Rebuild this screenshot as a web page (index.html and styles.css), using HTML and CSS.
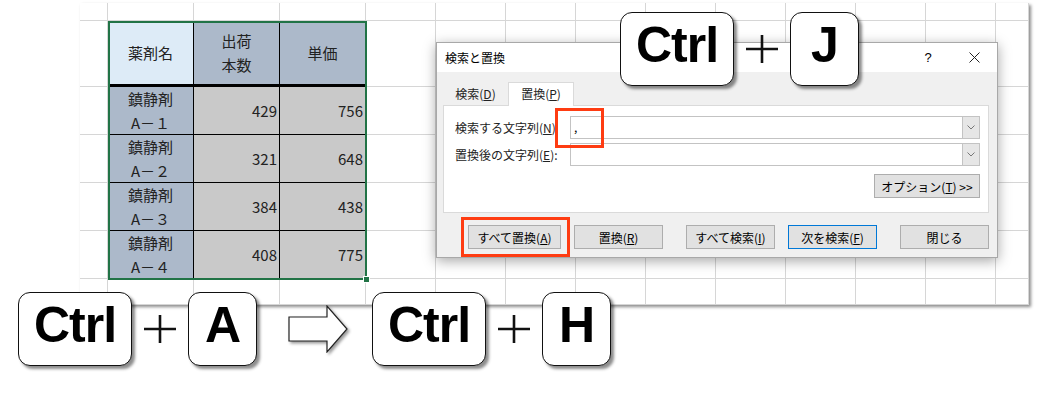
FILE: index.html
```html
<!DOCTYPE html>
<html lang="ja">
<head>
    <meta charset="UTF-8">
    <meta name="viewport" content="width=device-width, initial-scale=1.0">
    <title>検索と置換</title>
    <link rel="stylesheet" href="styles.css">
</head>
<body>
    <div class="stage">
        <div class="sheet" id="sheet">
            <div class="table">
                <div class="cell head-blue">薬剤名</div>
                <div class="cell head">出荷<br>本数</div>
                <div class="cell head">単価</div>

                <div class="cell name">鎮静剤<br>A－１</div>
                <div class="cell num">429</div>
                <div class="cell num">756</div>

                <div class="cell name">鎮静剤<br>A－２</div>
                <div class="cell num">321</div>
                <div class="cell num">648</div>

                <div class="cell name">鎮静剤<br>A－３</div>
                <div class="cell num">384</div>
                <div class="cell num">438</div>

                <div class="cell name">鎮静剤<br>A－４</div>
                <div class="cell num">408</div>
                <div class="cell num">775</div>

                <span class="handle"></span>
            </div>
        </div>

        <div class="dialog">
            <div class="titlebar">
                <span class="title">検索と置換</span>
                <span class="caption-btn">?</span>
                <span class="caption-btn">
                    <svg width="11" height="11" viewBox="0 0 11 11"><path d="M0.5 0.5L10.5 10.5M10.5 0.5L0.5 10.5" stroke="#222" stroke-width="1"/></svg>
                </span>
            </div>
            <div class="dialog-body">
                <div class="tabs">
                    <div class="tab">検索(<u>D</u>)</div>
                    <div class="tab active">置換(<u>P</u>)</div>
                </div>
                <div class="panel">
                    <div class="field">
                        <label>検索する文字列(<u>N</u>)</label>
                        <div class="combo">
                            <span class="value">,</span>
                            <span class="drop"><svg width="8" height="5" viewBox="0 0 8 5"><path d="M0.5 0.5L4 4L7.5 0.5" fill="none" stroke="#777"/></svg></span>
                        </div>
                    </div>
                    <div class="field">
                        <label>置換後の文字列(<u>E</u>):</label>
                        <div class="combo">
                            <span class="value"></span>
                            <span class="drop"><svg width="8" height="5" viewBox="0 0 8 5"><path d="M0.5 0.5L4 4L7.5 0.5" fill="none" stroke="#777"/></svg></span>
                        </div>
                    </div>
                    <div class="panel-foot">
                        <button class="btn btn-options">オプション(<u>T</u>) &gt;&gt;</button>
                    </div>
                </div>
                <div class="actions">
                    <button class="btn btn-all">すべて置換(<u>A</u>)</button>
                    <button class="btn">置換(<u>R</u>)</button>
                    <button class="btn btn-gap">すべて検索(<u>I</u>)</button>
                    <button class="btn btn-default">次を検索(<u>F</u>)</button>
                    <button class="btn btn-gap">閉じる</button>
                </div>
            </div>
            <span class="mark mark-input"></span>
            <span class="mark mark-all"></span>
        </div>

        <div class="keys keys-top">
            <div class="key key-wide">Ctrl</div>
            <svg class="plus" width="32" height="30" viewBox="0 0 32 30"><path d="M0 15H32M16 1V29" stroke="#111" stroke-width="2.6"/></svg>
            <div class="key key-narrow">J</div>
        </div>

        <div class="keys keys-bottom">
            <div class="key key-wide">Ctrl</div>
            <svg class="plus" width="32" height="30" viewBox="0 0 32 30"><path d="M0 15H32M16 1V29" stroke="#111" stroke-width="2.6"/></svg>
            <div class="key key-narrow">A</div>
            <svg class="arrow" width="62" height="48" viewBox="0 0 62 48">
                <path d="M1 12H39V1L59 24L39 47V36H1Z" fill="#fff" stroke="#222" stroke-width="1.2" stroke-linejoin="miter"/>
            </svg>
            <div class="key key-wide">Ctrl</div>
            <svg class="plus" width="32" height="30" viewBox="0 0 32 30"><path d="M0 15H32M16 1V29" stroke="#111" stroke-width="2.6"/></svg>
            <div class="key key-narrow">H</div>
        </div>
    </div>

    <script>
        // Fill the rest of the worksheet with empty grid cells
        const sheet = document.getElementById('sheet');
        const totalCells = 14 * 7 - 15;
        for (let i = 0; i < totalCells; i++) {
            const cell = document.createElement('div');
            cell.className = 'grid-cell';
            sheet.appendChild(cell);
        }
    </script>
</body>
</html>
```

FILE: styles.css
```css
* {
    margin: 0;
    padding: 0;
    box-sizing: border-box;
}

body {
    font-family: "Noto Sans CJK JP", "Noto Sans", sans-serif;
    background: #fff;
    color: #000;
}

.stage {
    position: relative;
    width: 1037px;
    height: 394px;
    overflow: hidden;
}

/* Worksheet */
.sheet {
    margin: 3px 0 0 80px;
    width: 949px;
    height: 302px;
    display: grid;
    grid-template-columns: 28px repeat(3, 86px) repeat(9, 70px) 1fr;
    grid-template-rows: 18px 66px repeat(4, 48px) 1fr;
    background: #fff;
    box-shadow: 2px 2px 3px rgba(0, 0, 0, 0.45);
}

.grid-cell {
    border-right: 1px solid #d6d6d6;
    border-bottom: 1px solid #d6d6d6;
}

.table {
    grid-column: 2 / 5;
    grid-row: 2 / 7;
    position: relative;
    display: grid;
    grid-template-columns: repeat(3, 86px);
    grid-template-rows: 66px repeat(4, 48px);
    font-size: 15px;
    line-height: 24px;
    color: #222;
}

.table::after {
    content: "";
    position: absolute;
    top: 0;
    left: 0;
    right: -1px;
    bottom: -1px;
    border: 2px solid #217346;
}

.cell {
    display: flex;
    align-items: center;
    justify-content: center;
    text-align: center;
    border-right: 1px solid #000;
    border-bottom: 1px solid #000;
    background: #c9c9c9;
}

.head-blue {
    background: #ddebf7;
    border-bottom: 3px solid #000;
}

.head {
    background: #acb9ca;
    border-bottom: 3px solid #000;
}

.name {
    background: #acb9ca;
}

.num {
    justify-content: flex-end;
    padding-right: 2px;
}

.handle {
    position: absolute;
    right: -4px;
    bottom: -4px;
    width: 7px;
    height: 7px;
    background: #217346;
    border: 1px solid #fff;
    z-index: 1;
}

/* Find and replace dialog */
.dialog {
    position: absolute;
    left: 436px;
    top: 42px;
    width: 562px;
    height: 216px;
    background: #f0f0f0;
    border: 1px solid #a8a8a8;
    box-shadow: 0 3px 12px rgba(0, 0, 0, 0.35);
    font-size: 12px;
    color: #000;
}

.titlebar {
    height: 29px;
    background: #fff;
    display: flex;
    align-items: center;
    padding-left: 8px;
}

.title {
    flex: 1;
}

.caption-btn {
    width: 46px;
    height: 29px;
    display: flex;
    align-items: center;
    justify-content: center;
    font-family: "Liberation Sans", sans-serif;
    font-size: 13px;
}

.dialog-body {
    padding: 10px 8px 0 6px;
}

.tabs {
    display: flex;
    align-items: flex-end;
    height: 23px;
    padding-left: 0;
}

.tab {
    width: 65px;
    height: 21px;
    line-height: 20px;
    text-align: center;
    color: #222;
}

.tab.active {
    width: 66px;
    height: 24px;
    line-height: 22px;
    background: #fff;
    border: 1px solid #dadada;
    border-bottom: none;
    margin-bottom: -1px;
    position: relative;
}

.panel {
    height: 108px;
    background: #fff;
    border: 1px solid #dadada;
    padding: 10px 8px 0 11px;
}

.field {
    display: flex;
    align-items: center;
    height: 23px;
    margin-bottom: 4px;
}

.field label {
    width: 115px;
    color: #222;
}

.combo {
    flex: 1;
    height: 23px;
    display: flex;
    border: 1px solid #c3c3c3;
    background: #fff;
}

.value {
    flex: 1;
    padding-left: 3px;
    line-height: 20px;
}

.drop {
    width: 17px;
    display: flex;
    align-items: center;
    justify-content: center;
    background: #e6e6e6;
    border-left: 1px solid #c3c3c3;
}

.panel-foot {
    display: flex;
    justify-content: flex-end;
    margin-top: 8px;
}

.btn {
    height: 24px;
    width: 89px;
    font-family: inherit;
    font-size: 12px;
    color: #000;
    background: #e1e1e1;
    border: 1px solid #adadad;
}

.btn-options {
    width: 106px;
}

.actions {
    display: flex;
    gap: 13px;
    margin-top: 12px;
    padding-left: 25px;
}

.btn-all {
    width: 93px;
}

.btn-gap {
    margin-left: 10px;
}

.btn-default {
    border-color: #0078d7;
}

.mark {
    position: absolute;
    border: 3px solid #fe3c12;
}

.mark-input {
    left: 118px;
    top: 65px;
    width: 49px;
    height: 40px;
}

.mark-all {
    left: 24px;
    top: 174px;
    width: 109px;
    height: 40px;
}

/* Keyboard shortcut keys */
.keys {
    position: absolute;
    display: flex;
    align-items: center;
}

.keys-top {
    left: 620px;
    top: 12px;
}

.keys-bottom {
    left: 18px;
    top: 292px;
}

.key {
    height: 74px;
    display: flex;
    align-items: center;
    justify-content: center;
    padding-bottom: 8px;
    background: #fff;
    border: 1.5px solid #111;
    border-radius: 12px;
    box-shadow: 3px 3px 3px rgba(0, 0, 0, 0.45);
    font-family: "Liberation Sans", Arial, sans-serif;
    font-weight: bold;
    font-size: 50px;
    letter-spacing: -1px;
    color: #000;
}

.key-wide {
    width: 114px;
}

.key-narrow {
    width: 69px;
}

.plus {
    margin: 0 12px;
}

.arrow {
    margin: 0 22px 0 31px;
    filter: drop-shadow(2px 2px 1.5px rgba(0, 0, 0, 0.4));
}
```
